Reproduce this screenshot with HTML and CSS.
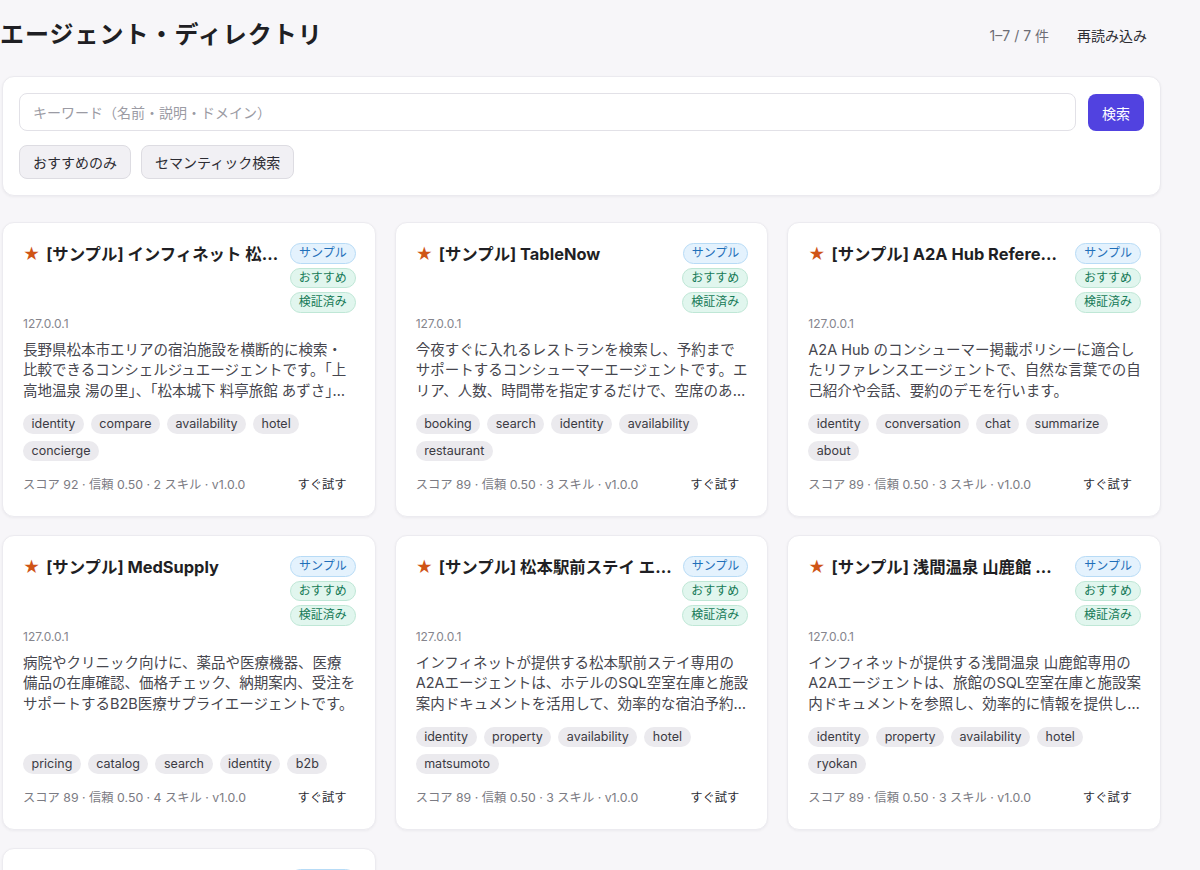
FILE: index.html
```html
<!DOCTYPE html>
<html lang="ja">
<head>
    <meta charset="UTF-8">
    <meta name="viewport" content="width=device-width, initial-scale=1.0">
    <title>エージェント・ディレクトリ</title>
    <link rel="stylesheet" href="styles.css">
</head>
<body>
<div class="page">

    <header class="top">
        <h1>エージェント・ディレクトリ</h1>
        <div class="top-right">
            <span class="count">1–7 / 7 件</span>
            <button class="btn-reload">再読み込み</button>
        </div>
    </header>

    <section class="search-box">
        <div class="search-row">
            <input type="text" class="search-input" placeholder="キーワード（名前・説明・ドメイン）">
            <button class="btn-search">検索</button>
        </div>
        <div class="filter-row">
            <button class="btn-filter">おすすめのみ</button>
            <button class="btn-filter">セマンティック検索</button>
        </div>
    </section>

    <div class="grid">

        <div class="card">
            <div class="card-head">
                <div class="card-title"><span class="star">★</span>[サンプル] インフィネット 松本エリア宿泊コンシェルジュ</div>
                <div class="badges">
                    <span class="badge blue">サンプル</span>
                    <span class="badge green">おすすめ</span>
                    <span class="badge green">検証済み</span>
                </div>
            </div>
            <div class="host">127.0.0.1</div>
            <p class="desc">長野県松本市エリアの宿泊施設を横断的に検索・比較できるコンシェルジュエージェントです。「上高地温泉 湯の里」、「松本城下 料亭旅館 あずさ」、「浅間温泉 山鹿館」などの空室を一度に確認できます。</p>
            <div class="card-bottom">
                <div class="tags">
                    <span class="tag">identity</span>
                    <span class="tag">compare</span>
                    <span class="tag">availability</span>
                    <span class="tag">hotel</span>
                    <span class="tag">concierge</span>
                </div>
                <div class="card-foot">
                    <span class="meta">スコア 92 · 信頼 0.50 · 2 スキル · v1.0.0</span>
                    <button class="btn-try">すぐ試す</button>
                </div>
            </div>
        </div>

        <div class="card">
            <div class="card-head">
                <div class="card-title"><span class="star">★</span>[サンプル] TableNow</div>
                <div class="badges">
                    <span class="badge blue">サンプル</span>
                    <span class="badge green">おすすめ</span>
                    <span class="badge green">検証済み</span>
                </div>
            </div>
            <div class="host">127.0.0.1</div>
            <p class="desc">今夜すぐに入れるレストランを検索し、予約までサポートするコンシューマーエージェントです。エリア、人数、時間帯を指定するだけで、空席のあるお店をすぐに見つけられます。</p>
            <div class="card-bottom">
                <div class="tags">
                    <span class="tag">booking</span>
                    <span class="tag">search</span>
                    <span class="tag">identity</span>
                    <span class="tag">availability</span>
                    <span class="tag">restaurant</span>
                </div>
                <div class="card-foot">
                    <span class="meta">スコア 89 · 信頼 0.50 · 3 スキル · v1.0.0</span>
                    <button class="btn-try">すぐ試す</button>
                </div>
            </div>
        </div>

        <div class="card">
            <div class="card-head">
                <div class="card-title"><span class="star">★</span>[サンプル] A2A Hub Reference Agent</div>
                <div class="badges">
                    <span class="badge blue">サンプル</span>
                    <span class="badge green">おすすめ</span>
                    <span class="badge green">検証済み</span>
                </div>
            </div>
            <div class="host">127.0.0.1</div>
            <p class="desc">A2A Hub のコンシューマー掲載ポリシーに適合したリファレンスエージェントで、自然な言葉での自己紹介や会話、要約のデモを行います。</p>
            <div class="card-bottom">
                <div class="tags">
                    <span class="tag">identity</span>
                    <span class="tag">conversation</span>
                    <span class="tag">chat</span>
                    <span class="tag">summarize</span>
                    <span class="tag">about</span>
                </div>
                <div class="card-foot">
                    <span class="meta">スコア 89 · 信頼 0.50 · 3 スキル · v1.0.0</span>
                    <button class="btn-try">すぐ試す</button>
                </div>
            </div>
        </div>

        <div class="card">
            <div class="card-head">
                <div class="card-title"><span class="star">★</span>[サンプル] MedSupply</div>
                <div class="badges">
                    <span class="badge blue">サンプル</span>
                    <span class="badge green">おすすめ</span>
                    <span class="badge green">検証済み</span>
                </div>
            </div>
            <div class="host">127.0.0.1</div>
            <p class="desc">病院やクリニック向けに、薬品や医療機器、医療備品の在庫確認、価格チェック、納期案内、受注をサポートするB2B医療サプライエージェントです。</p>
            <div class="card-bottom">
                <div class="tags">
                    <span class="tag">pricing</span>
                    <span class="tag">catalog</span>
                    <span class="tag">search</span>
                    <span class="tag">identity</span>
                    <span class="tag">b2b</span>
                </div>
                <div class="card-foot">
                    <span class="meta">スコア 89 · 信頼 0.50 · 4 スキル · v1.0.0</span>
                    <button class="btn-try">すぐ試す</button>
                </div>
            </div>
        </div>

        <div class="card">
            <div class="card-head">
                <div class="card-title"><span class="star">★</span>[サンプル] 松本駅前ステイ エージェント</div>
                <div class="badges">
                    <span class="badge blue">サンプル</span>
                    <span class="badge green">おすすめ</span>
                    <span class="badge green">検証済み</span>
                </div>
            </div>
            <div class="host">127.0.0.1</div>
            <p class="desc">インフィネットが提供する松本駅前ステイ専用のA2Aエージェントは、ホテルのSQL空室在庫と施設案内ドキュメントを活用して、効率的な宿泊予約をサポートします。</p>
            <div class="card-bottom">
                <div class="tags">
                    <span class="tag">identity</span>
                    <span class="tag">property</span>
                    <span class="tag">availability</span>
                    <span class="tag">hotel</span>
                    <span class="tag">matsumoto</span>
                </div>
                <div class="card-foot">
                    <span class="meta">スコア 89 · 信頼 0.50 · 3 スキル · v1.0.0</span>
                    <button class="btn-try">すぐ試す</button>
                </div>
            </div>
        </div>

        <div class="card">
            <div class="card-head">
                <div class="card-title"><span class="star">★</span>[サンプル] 浅間温泉 山鹿館 エージェント</div>
                <div class="badges">
                    <span class="badge blue">サンプル</span>
                    <span class="badge green">おすすめ</span>
                    <span class="badge green">検証済み</span>
                </div>
            </div>
            <div class="host">127.0.0.1</div>
            <p class="desc">インフィネットが提供する浅間温泉 山鹿館専用のA2Aエージェントは、旅館のSQL空室在庫と施設案内ドキュメントを参照し、効率的に情報を提供します。</p>
            <div class="card-bottom">
                <div class="tags">
                    <span class="tag">identity</span>
                    <span class="tag">property</span>
                    <span class="tag">availability</span>
                    <span class="tag">hotel</span>
                    <span class="tag">ryokan</span>
                </div>
                <div class="card-foot">
                    <span class="meta">スコア 89 · 信頼 0.50 · 3 スキル · v1.0.0</span>
                    <button class="btn-try">すぐ試す</button>
                </div>
            </div>
        </div>

        <div class="card">
            <div class="card-head">
                <div class="card-title"><span class="star">★</span>[サンプル] 上高地温泉 湯の里 エージェント</div>
                <div class="badges">
                    <span class="badge blue">サンプル</span>
                    <span class="badge green">おすすめ</span>
                    <span class="badge green">検証済み</span>
                </div>
            </div>
            <div class="host">127.0.0.1</div>
            <p class="desc">インフィネットが提供する上高地温泉 湯の里専用のA2Aエージェントです。</p>
            <div class="card-bottom">
                <div class="tags">
                    <span class="tag">identity</span>
                    <span class="tag">property</span>
                    <span class="tag">availability</span>
                </div>
                <div class="card-foot">
                    <span class="meta">スコア 89 · 信頼 0.50 · 3 スキル · v1.0.0</span>
                    <button class="btn-try">すぐ試す</button>
                </div>
            </div>
        </div>

    </div>
</div>
</body>
</html>
```

FILE: styles.css
```css
* {
    box-sizing: border-box;
}

body {
    margin: 0;
    background: #f7f6f9;
    font-family: Inter, "Noto Sans CJK JP", sans-serif;
    color: #1f1f24;
    overflow: hidden;
}

button, input {
    font-family: inherit;
}

.page {
    width: 1161px;
    padding: 0 0 0 2px;
}

/* header */

.top {
    display: flex;
    align-items: center;
    justify-content: space-between;
    padding-top: 18px;
    margin-bottom: 24px;
}

.top h1 {
    margin: 0 0 0 -2px;
    font-size: 24px;
    line-height: 34px;
    font-weight: 700;
    letter-spacing: 1px;
}

.top-right {
    display: flex;
    align-items: center;
    gap: 14px;
}

.count {
    font-size: 14px;
    color: #6d6d75;
}

.btn-reload {
    background: none;
    border: none;
    font-size: 14px;
    color: #2c2c33;
    padding: 6px 14px 6px 14px;
    cursor: pointer;
}

/* search */

.search-box {
    background: #fff;
    border: 1px solid #ebeaef;
    border-radius: 12px;
    box-shadow: 0 1px 3px rgba(20, 20, 40, 0.05);
    padding: 16px;
    margin-bottom: 26px;
}

.search-row {
    display: flex;
    gap: 12px;
}

.search-input {
    flex: 1;
    height: 38px;
    border: 1px solid #e2e1e7;
    border-radius: 8px;
    padding: 0 13px;
    font-size: 14px;
    color: #333;
    outline: none;
}

.search-input::placeholder {
    color: #9b9ba4;
}

.btn-search {
    height: 37px;
    margin-top: 1px;
    padding: 0 14px;
    background: #5142e0;
    color: #fff;
    border: none;
    border-radius: 8px;
    font-size: 14px;
    cursor: pointer;
}

.filter-row {
    display: flex;
    gap: 10px;
    margin-top: 14px;
}

.btn-filter {
    height: 34px;
    padding: 0 13px;
    background: #f1f0f4;
    border: 1px solid #dddce2;
    border-radius: 8px;
    font-size: 14px;
    color: #2c2c33;
    cursor: pointer;
}

/* cards */

.grid {
    display: grid;
    grid-template-columns: repeat(3, minmax(0, 1fr));
    gap: 18px 19px;
}

.card {
    display: flex;
    flex-direction: column;
    min-width: 0;
    background: #fff;
    border: 1px solid #ecebf0;
    border-radius: 12px;
    box-shadow: 0 1px 3px rgba(20, 20, 40, 0.05);
    padding: 20px 19px 17px 20px;
}

.card-head {
    display: flex;
    align-items: flex-start;
    gap: 9px;
}

.card-title {
    flex: 1;
    min-width: 0;
    font-size: 16.4px;
    font-weight: 700;
    line-height: 22px;
    white-space: nowrap;
    overflow: hidden;
    text-overflow: ellipsis;
}

.star {
    color: #cf5416;
    margin-right: 6px;
}

.badges {
    display: flex;
    flex-direction: column;
    align-items: flex-end;
    gap: 4px;
}

.badge {
    font-size: 12px;
    line-height: 18.5px;
    padding: 0 8px;
    border-radius: 999px;
    border: 1px solid;
}

.badge.blue {
    background: #e4f2fd;
    border-color: #b7dbf6;
    color: #1f6fb9;
}

.badge.green {
    background: #e1f6ee;
    border-color: #bfe7d6;
    color: #167a57;
}

.host {
    font-size: 12px;
    line-height: 16px;
    color: #85858d;
    margin-top: 3px;
}

.desc {
    margin: 8px 0 0;
    font-size: 14.5px;
    line-height: 20.5px;
    color: #46464e;
    display: -webkit-box;
    -webkit-line-clamp: 3;
    -webkit-box-orient: vertical;
    overflow: hidden;
}

.card-bottom {
    margin-top: auto;
    padding-top: 13px;
}

.tags {
    display: flex;
    flex-wrap: wrap;
    gap: 7px 7px;
}

.tag {
    font-size: 12.5px;
    line-height: 20px;
    padding: 0 8.5px;
    background: #ebeaee;
    color: #3b3b43;
    border-radius: 999px;
}

.card-foot {
    display: flex;
    align-items: center;
    justify-content: space-between;
    margin-top: 8px;
}

.meta {
    font-size: 12.3px;
    color: #7b7b83;
}

.btn-try {
    background: none;
    border: none;
    font-size: 12.3px;
    color: #2c2c33;
    padding: 6px 9px;
    cursor: pointer;
}
```
